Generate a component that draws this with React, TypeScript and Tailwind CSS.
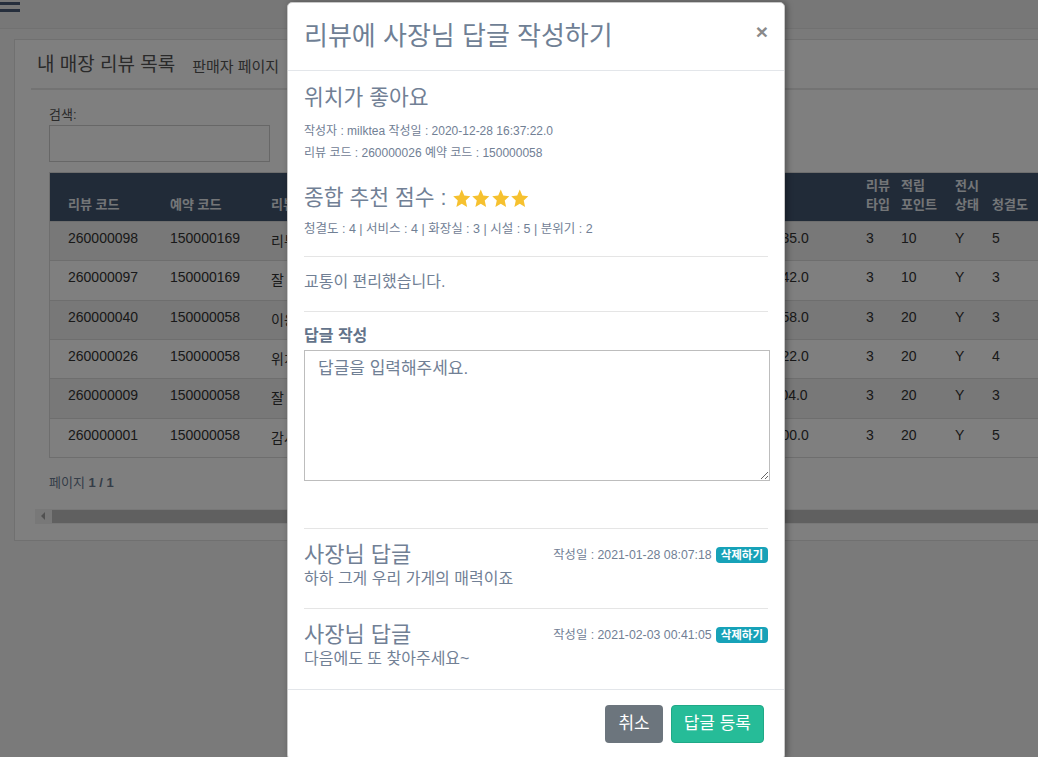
import React from 'react';

const rows = [
  { code: '260000098', rsv: '150000169', title: '리뷰 테스트', date: '2021-01-27 10:12:35.0', type: '3', point: '10', show: 'Y', clean: '5' },
  { code: '260000097', rsv: '150000169', title: '잘 쉬다 갑니다', date: '2021-01-27 09:48:42.0', type: '3', point: '10', show: 'Y', clean: '3' },
  { code: '260000040', rsv: '150000058', title: '이용 후기', date: '2021-01-05 14:20:58.0', type: '3', point: '20', show: 'Y', clean: '3' },
  { code: '260000026', rsv: '150000058', title: '위치가 좋아요', date: '2020-12-28 16:37:22.0', type: '3', point: '20', show: 'Y', clean: '4' },
  { code: '260000009', rsv: '150000058', title: '잘 이용했어요', date: '2020-12-20 11:05:04.0', type: '3', point: '20', show: 'Y', clean: '3' },
  { code: '260000001', rsv: '150000058', title: '감사합니다', date: '2020-12-15 18:30:00.0', type: '3', point: '20', show: 'Y', clean: '5' },
];

const replies = [
  { date: '2021-01-28 08:07:18', text: '하하 그게 우리 가게의 매력이죠' },
  { date: '2021-02-03 00:41:05', text: '다음에도 또 찾아주세요~' },
];

const Star = () => (
  <svg viewBox="0 0 24 24" className="h-[21px] w-[19.5px]" fill="#f6c12f" preserveAspectRatio="none">
    <path d="M12 1.8l3.1 6.9 7.4.7-5.6 5 1.7 7.4L12 17.9l-6.6 3.9 1.7-7.4-5.6-5 7.4-.7z" />
  </svg>
);

export default function App() {
  return (
    <div className="relative h-[757px] w-[1038px] overflow-hidden bg-[#f4f4f4] font-['Liberation_Sans','Noto_Sans_CJK_KR',sans-serif]">
      {/* top bar */}
      <div className="flex h-[29px] flex-col overflow-hidden border-b border-[#e2e2e2] bg-[#eeeeee]">
        <div className="mt-[-5px] flex w-[20px] flex-col gap-[4px]">
          <div className="h-[3px] bg-[#4a5d78]" />
          <div className="h-[3px] bg-[#4a5d78]" />
          <div className="h-[3px] bg-[#4a5d78]" />
        </div>
      </div>

      {/* card */}
      <div className="ml-[14px] mt-[10px] h-[502px] w-[1040px] border border-[#e0e0e0] bg-white pl-[16px]">
        <div className="flex h-[50px] items-end border-b-2 border-[#e6e6e6] pb-[11px] pl-[6px]">
          <span className="text-[19px] leading-[24px] text-[#555]">내 매장 리뷰 목록</span>
          <span className="ml-[17px] text-[15px] leading-[20px] text-[#555]">판매자 페이지</span>
        </div>

        <div className="pl-[18px]">
          <div className="mt-[16px] text-[13px] leading-[18px] text-[#555]">검색:</div>
          <div className="mt-[1px] h-[37px] w-[221px] border border-[#cfcfcf] bg-white" />

          {/* table */}
          <div className="mt-[10px] w-[1000px] border border-[#dcdcdc] text-[14px]">
            <div className="flex h-[48px] items-end bg-[#435670] pb-[7px] text-[13px] font-bold leading-[19px] text-[#e8ecf1]">
              <div className="w-[120px] pl-[18px]">리뷰 코드</div>
              <div className="w-[101px]">예약 코드</div>
              <div className="w-[396px]">리뷰 제목</div>
              <div className="w-[199px]">작성일</div>
              <div className="w-[35px]">리뷰<br />타입</div>
              <div className="w-[54px]">적립<br />포인트</div>
              <div className="w-[37px]">전시<br />상태</div>
              <div className="w-[50px]">청결도</div>
            </div>
            {rows.map((r, i) => (
              <div
                key={r.code}
                className={`flex h-[39.33px] border-t border-[#dddddd] pt-[7px] leading-[18px] text-[#333] ${i % 2 === 0 ? 'bg-[#f0f0f0]' : 'bg-white'}`}
              >
                <div className="w-[120px] pl-[18px]">{r.code}</div>
                <div className="w-[101px]">{r.rsv}</div>
                <div className="w-[396px] pt-[3px]">{r.title}</div>
                <div className="w-[199px]">{r.date}</div>
                <div className="w-[35px]">{r.type}</div>
                <div className="w-[54px]">{r.point}</div>
                <div className="w-[37px]">{r.show}</div>
                <div className="w-[50px]">{r.clean}</div>
              </div>
            ))}
          </div>

          <div className="mt-[16px] text-[13px] leading-[18px] text-[#6a7a90]">
            페이지 <span className="font-bold">1 / 1</span>
          </div>
        </div>

        {/* horizontal scrollbar */}
        <div className="ml-[4px] mt-[17px] flex h-[15px] items-center bg-[#f1f1f1]">
          <div className="ml-[6px] h-0 w-0 border-y-[4px] border-r-[4px] border-y-transparent border-r-[#a3a3a3]" />
          <div className="ml-[7px] h-[13px] flex-1 bg-[#c1c1c1]" />
        </div>
      </div>

      {/* backdrop */}
      <div className="absolute inset-0 bg-black/50" />

      {/* modal */}
      <div className="absolute left-[287px] top-[2px] w-[498px] rounded-[5px] border border-[#c8c8c8] bg-white text-[#718095] shadow-[2px_0_6px_rgba(0,0,0,0.35)]">
        <div className="flex h-[68px] items-center justify-between border-b border-[#e3e6ea] px-[16px]">
          <h2 className="mt-[-2px] text-[26px] leading-[32px] text-[#6f7f95]">리뷰에 사장님 답글 작성하기</h2>
          <span className="mt-[-10px] text-[21px] font-bold leading-none text-[#8a8a8a]">×</span>
        </div>

        <div className="px-[16px] pb-[19px] pt-[15px]">
          <h3 className="text-[21.5px] leading-[24px]">위치가 좋아요</h3>
          <div className="mt-[10px] text-[12px] leading-[22px]">
            <div>작성자 : milktea 작성일 : 2020-12-28 16:37:22.0</div>
            <div>리뷰 코드 : 260000026 예약 코드 : 150000058</div>
          </div>

          <div className="mt-[22px] flex items-center text-[21.5px] leading-[24px]">
            종합 추천 점수 :
            <span className="ml-[5px] flex">
              <Star />
              <Star />
              <Star />
              <Star />
            </span>
          </div>
          <div className="mt-[10px] text-[12.5px] leading-[18px]">
            청결도 : 4 | 서비스 : 4 | 화장실 : 3 | 시설 : 5 | 분위기 : 2
          </div>

          <div className="mt-[18px] border-t border-[#e5e5e5]" />
          <p className="mt-[14px] text-[16px] leading-[22px]">교통이 편리했습니다.</p>
          <div className="mt-[18px] border-t border-[#e5e5e5]" />

          <div className="mt-[13px] text-[16px] font-bold leading-[22px] text-[#63738a]">답글 작성</div>
          <textarea
            className="mt-[3px] block h-[131px] w-[466px] resize-y border border-[#bdbdbd] px-[13px] py-[6px] text-[17px] leading-[24px] text-[#555] outline-none placeholder:text-[#718095]"
            placeholder="답글을 입력해주세요."
          />

          <div className="mt-[47px] border-t border-[#e5e5e5]" />
          {replies.map((r, i) => (
            <div key={r.date}>
              {i > 0 && <div className="mt-[18px] border-t border-[#e5e5e5]" />}
              <div className="mt-[13px] flex items-center justify-between">
                <span className="text-[22px] leading-[26px]">사장님 답글</span>
                <span className="flex items-center text-[12.3px] leading-[16px]">
                  작성일 : {r.date}
                  <span className="ml-[4px] rounded-[4px] bg-[#17a2b8] px-[5px] text-[11.5px] font-bold leading-[16px] text-white">
                    삭제하기
                  </span>
                </span>
              </div>
              <p className="text-[16px] leading-[22px]">{r.text}</p>
            </div>
          ))}
        </div>

        <div className="flex justify-end gap-[8px] border-t border-[#e3e6ea] pb-[16px] pr-[20px] pt-[15px]">
          <button className="h-[38px] rounded-[4px] bg-[#6c757d] px-[13px] text-[17px] text-white">취소</button>
          <button className="h-[38px] rounded-[4px] border border-[#1fa987] bg-[#26bc98] px-[12px] text-[17px] text-white">답글 등록</button>
        </div>
      </div>
    </div>
  );
}
